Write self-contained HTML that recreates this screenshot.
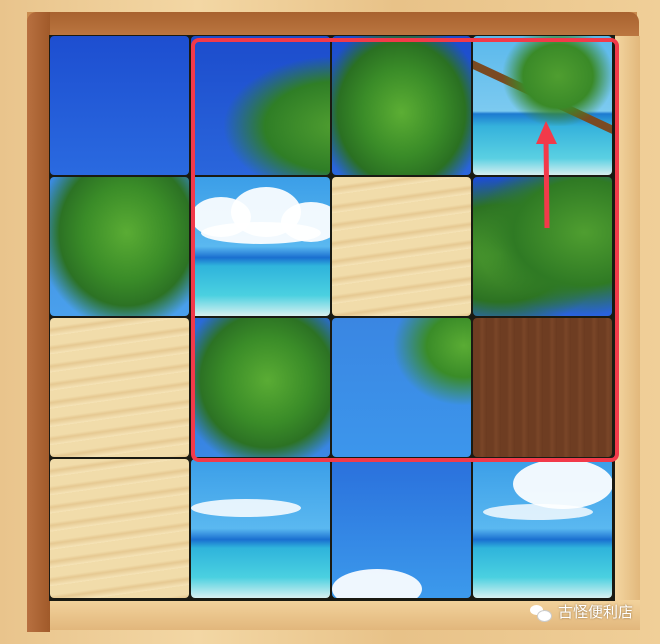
<!DOCTYPE html>
<html><head><meta charset="utf-8"><style>
body{margin:0;width:660px;height:644px;overflow:hidden;background:linear-gradient(90deg,#e9c48c,#f3d7a4 30%,#e8c288 60%,#f0cf98);position:relative;font-family:"Liberation Sans","Noto Sans CJK SC",sans-serif}
.frame{position:absolute;left:27px;top:12px;width:610px;height:600px;background:#c98a4e}
.ftop{position:absolute;left:27px;top:12px;width:612px;height:24px;background:linear-gradient(#a8622f,#bb7640);border-radius:10px 10px 0 0}
.fleft{position:absolute;left:27px;top:12px;width:23px;height:620px;background:linear-gradient(90deg,#b87040,#a05a2a);border-radius:10px 0 0 0}
.fright{position:absolute;left:614px;top:36px;width:26px;height:570px;background:linear-gradient(90deg,#f4d7a2,#e2b87c)}
.fbot{position:absolute;left:50px;top:600px;width:590px;height:30px;background:linear-gradient(#f2d29c,#e2b77c)}
.board{position:absolute;left:49px;top:35px;width:566px;height:566px;background:#1a1a12}
.t{position:absolute;width:139px;height:139px;border-radius:4px;overflow:hidden}
.blue{background:linear-gradient(#1d4ed0,#2a6ae0)}
.sand{background:repeating-linear-gradient(172deg,#f1dcaa 0 9px,#e6c992 12px,#f6e4b8 18px);}
.sea{background:linear-gradient(#3b9ee8 0,#5ab8f0 50%,#1a6fd0 58%,#2fb4dc 64%,#4ad0e0 85%,#d8f0f0 100%)}
.cloud{position:absolute;background:#fff;border-radius:50%;opacity:.92}
</style></head><body>
<div class="frame"></div>
<div class="ftop"></div><div class="fleft"></div><div class="fright"></div><div class="fbot"></div>
<div class="board">
<div class="t blue" style="left:1px;top:1px"></div>
<div class="t" style="left:142px;top:1px;background:radial-gradient(ellipse at 105% 65%,#4f9e30 0,#2f7e26 35%,rgba(0,0,0,0) 55%),linear-gradient(#1c4ccc,#2a66dc)"></div>
<div class="t" style="left:283px;top:1px;background:radial-gradient(ellipse at 50% 55%,#5cae34 0,#3a8c28 40%,#2a7022 65%,rgba(0,0,0,0) 85%),linear-gradient(#1c4ccc,#2a66dc)"></div>
<div class="t" style="left:424px;top:1px;background:linear-gradient(#5ab8ec 0,#7ccaf0 54%,#1d7ad0 56%,#35b2dc 65%,#5ad0e2 88%,#d6eef0 100%)">
 <div style="position:absolute;left:-10px;top:20px;width:170px;height:8px;background:#7a4a22;transform:rotate(25deg);transform-origin:left"></div>
 <div style="position:absolute;left:30px;top:-10px;width:110px;height:100px;background:radial-gradient(ellipse,#4f9e30 0,#3a8a28 45%,rgba(0,0,0,0) 72%)"></div>
</div>
<div class="t" style="left:1px;top:142px;background:radial-gradient(ellipse at 55% 40%,#5aac34 0,#3a8c28 40%,#2c7224 62%,rgba(0,0,0,0) 82%),linear-gradient(#3a8ae0,#4aa0ec)"></div>
<div class="t sea" style="left:142px;top:142px">
 <div class="cloud" style="left:0;top:20px;width:60px;height:40px"></div>
 <div class="cloud" style="left:40px;top:10px;width:70px;height:50px"></div>
 <div class="cloud" style="left:90px;top:25px;width:60px;height:40px"></div>
 <div class="cloud" style="left:10px;top:45px;width:120px;height:22px"></div>
</div>
<div class="t sand" style="left:283px;top:142px"></div>
<div class="t" style="left:424px;top:142px;background:radial-gradient(ellipse at 80% 40%,#4f9e30 0,#2f7a24 45%,rgba(0,0,0,0) 70%),radial-gradient(ellipse at 20% 55%,#4f9e30 0,#2c7222 45%,rgba(0,0,0,0) 70%),linear-gradient(#1d4ed0,#2a63dc)"></div>
<div class="t sand" style="left:1px;top:283px"></div>
<div class="t" style="left:142px;top:283px;background:radial-gradient(ellipse at 55% 45%,#5aac34 0,#3a8c28 40%,#2c7224 62%,rgba(0,0,0,0) 82%),linear-gradient(#2a6ad8,#3a88e4)"></div>
<div class="t" style="left:283px;top:283px;background:radial-gradient(ellipse at 95% 20%,#5aac34 0,#3a8c28 20%,rgba(0,0,0,0) 38%),linear-gradient(#3a86e2,#3c96ec)"></div>
<div class="t" style="left:424px;top:283px;background:repeating-linear-gradient(90deg,#6e3d22 0 6px,#7a4628 9px,#6a3a20 14px)"></div>
<div class="t sand" style="left:1px;top:424px"></div>
<div class="t sea" style="left:142px;top:424px">
 <div class="cloud" style="left:0;top:40px;width:110px;height:18px;opacity:.85"></div>
</div>
<div class="t" style="left:283px;top:424px;background:linear-gradient(#2a70dc,#3c9aec)">
 <div class="cloud" style="left:0;top:110px;width:90px;height:40px"></div>
</div>
<div class="t sea" style="left:424px;top:424px">
 <div class="cloud" style="left:40px;top:0;width:100px;height:50px"></div>
 <div class="cloud" style="left:10px;top:45px;width:110px;height:16px;opacity:.8"></div>
</div>
</div>
<div style="position:absolute;left:191px;top:38px;width:420px;height:416px;border:4px solid #f23a4a;border-radius:8px"></div>
<svg style="position:absolute;left:0;top:0" width="660" height="644"><line x1="547" y1="228" x2="546" y2="138" stroke="#f23a4a" stroke-width="5"/><polygon points="546,121 536,144 557,144" fill="#f23a4a"/></svg>
<div style="position:absolute;left:530px;top:605px;width:20px;height:14px"><div style="position:absolute;left:0;top:0;width:13px;height:10px;border-radius:50%;background:#fff"></div><div style="position:absolute;left:7px;top:5px;width:13px;height:10px;border-radius:50%;background:#fff;border:1px solid #ccc"></div></div>
<div style="position:absolute;left:558px;top:601px;font-size:15px;color:#fff;text-shadow:0 0 2px #8a6a40">古怪便利店</div>
</body></html>
